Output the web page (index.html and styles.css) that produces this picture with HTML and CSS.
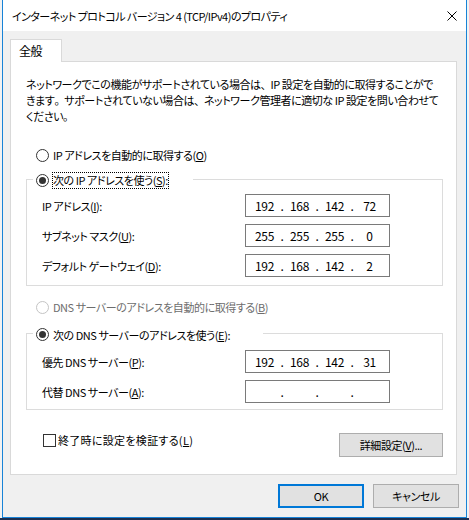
FILE: index.html
```html
<!DOCTYPE html>
<html lang="ja">
<head>
<meta charset="utf-8">
<title>インターネット プロトコル バージョン 4 (TCP/IPv4)のプロパティ</title>
<link rel="stylesheet" href="styles.css">
</head>
<body>
<div class="window">
  <div class="titlebar">
    <span class="title">インターネット プロトコル バージョン 4 (TCP/IPv4)のプロパティ</span>
    <svg class="close" width="10" height="10" viewBox="0 0 10 10"><path d="M0.5 0.5L9.5 9.5M9.5 0.5L0.5 9.5" stroke="#000" stroke-width="1" fill="none"/></svg>
  </div>
  <div class="client">
    <div class="tab">全般</div>
    <div class="panel">
      <p class="desc">ネットワークでこの機能がサポートされている場合は<span class="fw">、</span>IP 設定を自動的に取得することがで<br>きます<span class="fw">。</span>サポートされていない場合は<span class="fw">、</span>ネットワーク管理者に適切な IP 設定を問い合わせて<br>ください<span class="fw">。</span></p>

      <div class="radio-row r1"><span class="radio"></span><span class="rlabel">IP アドレスを自動的に取得する(<u>O</u>)</span></div>

      <div class="group g1">
        <div class="legend lg1"><span class="radio checked"></span><span class="rlabel focus">次の IP アドレスを使う(<u>S</u>):</span></div>
        <div class="fields">
          <div class="field"><span class="flabel">IP アドレス(<u>I</u>):</span><div class="ipbox"><span>192</span><i>.</i><span>168</span><i>.</i><span>142</span><i>.</i><span>72</span></div></div>
          <div class="field"><span class="flabel">サブネット マスク(<u>U</u>):</span><div class="ipbox"><span>255</span><i>.</i><span>255</span><i>.</i><span>255</span><i>.</i><span>0</span></div></div>
          <div class="field"><span class="flabel">デフォルト ゲートウェイ(<u>D</u>):</span><div class="ipbox"><span>192</span><i>.</i><span>168</span><i>.</i><span>142</span><i>.</i><span>2</span></div></div>
        </div>
      </div>

      <div class="radio-row r3 disabled"><span class="radio"></span><span class="rlabel">DNS サーバーのアドレスを自動的に取得する(<u>B</u>)</span></div>

      <div class="group g2">
        <div class="legend lg2"><span class="radio checked"></span><span class="rlabel">次の DNS サーバーのアドレスを使う(<u>E</u>):</span></div>
        <div class="fields">
          <div class="field"><span class="flabel">優先 DNS サーバー(<u>P</u>):</span><div class="ipbox"><span>192</span><i>.</i><span>168</span><i>.</i><span>142</span><i>.</i><span>31</span></div></div>
          <div class="field"><span class="flabel">代替 DNS サーバー(<u>A</u>):</span><div class="ipbox"><span></span><i>.</i><span></span><i>.</i><span></span><i>.</i><span></span></div></div>
        </div>
      </div>

      <div class="bottomrow">
        <div class="check"><span class="cbox"></span><span class="kanji">終了時に設定を検証する(<u>L</u>)</span></div>
        <div class="btn adv">詳細設定(<u>V</u>)...</div>
      </div>
    </div>
    <div class="buttons">
      <div class="btn default">OK</div>
      <div class="btn">キャンセル</div>
    </div>
  </div>
</div>
</body>
</html>
```

FILE: styles.css
```css
* { box-sizing: border-box; }
html, body { margin: 0; padding: 0; }
body {
  height: 520px;
  overflow: hidden;
  background: linear-gradient(#f2f2f2 0, #f2f2f2 518px, #1d2f4f 518px);
  font-family: "Noto Sans CJK JP", sans-serif;
  font-size: 11px;
  letter-spacing: -0.45px;
  color: #000;
  font-feature-settings: "palt";
}
.window {
  margin-left: 2px;
  width: 465px;
  height: 518px;
  border: 1px solid #1883d7;
  border-top: none;
  display: flex;
  flex-direction: column;
  background: #f0f0f0;
}
.titlebar {
  height: 31px;
  flex: none;
  background: #fff;
  display: flex;
  align-items: center;
  justify-content: space-between;
  padding: 0 9px 0 9px;
}
.title { line-height: 16px; letter-spacing: -0.55px; }
.close { display: block; }
.client {
  flex: 1;
  padding: 8px 0 0 7px;
  display: flex;
  flex-direction: column;
}
.tab {
  width: 52px;
  height: 23px;
  border: 1px solid #d9d9d9;
  border-bottom: none;
  background: #fff;
  position: relative;
  z-index: 1;
  margin-bottom: -1px;
  padding-left: 8px;
  line-height: 21px;
  font-size: 12px;
}
.panel {
  width: 447px;
  height: 414px;
  border: 1px solid #d9d9d9;
  background: #fff;
  padding-top: 14px;
  display: flex;
  flex-direction: column;
}
.desc {
  margin: 0 0 0 15px;
  line-height: 16px;
  white-space: nowrap;
}
.fw { font-feature-settings: normal; letter-spacing: -1px; }
.kanji { letter-spacing: 0.3px; }
.radio-row {
  display: flex;
  align-items: center;
  height: 16px;
  margin-left: 25px;
}
.r1 { margin-top: 23px; }
.r3 { margin-top: 13px; }
.radio {
  position: relative;
  flex: none;
  width: 13px;
  height: 13px;
  border: 1px solid #333;
  border-radius: 50%;
  background: #fff;
  margin-right: 4px;
}
.radio.checked::after {
  content: "";
  position: absolute;
  left: 2px; top: 2px; right: 2px; bottom: 2px;
  border-radius: 50%;
  background: #333;
}
.disabled { color: #6d6d6d; }
.disabled .radio { border-color: #c4c4c4; }
.group {
  margin: 0 13px 0 15px;
  border: 1px solid #dcdcdc;
  padding-left: 15px;
}
.g1 { margin-top: 16px; padding-bottom: 8px; }
.g2 { margin-top: 18px; padding-bottom: 6px; }
.legend {
  display: flex;
  align-items: center;
  height: 17px;
  margin: -8px 0 0 -9px;
  padding-left: 3px;
  background: #fff;
}
.legend .radio { margin-right: 3px; }
.lg1 { width: 160px; }
.lg2 { width: 230px; }
.focus {
  border: 1px dotted #000;
  height: 17px;
  line-height: 15px;
}
.lg2 .rlabel { padding-left: 1px; }
.fields {
  display: flex;
  flex-direction: column;
  gap: 7px;
}
.g1 .fields { margin-top: 5px; }
.g2 .fields { margin-top: 7px; }
.field {
  display: flex;
  align-items: center;
  height: 23px;
}
.flabel { width: 203px; flex: none; }
.ipbox {
  width: 145px;
  height: 23px;
  border: 1px solid #7a7a7a;
  background: #fff;
  display: flex;
  align-items: center;
  padding-left: 4px;
  font-size: 12px;
  letter-spacing: -0.3px;
}
.ipbox span { width: 29px; text-align: center; }
.ipbox i { width: 6px; font-style: normal; text-align: center; }
.bottomrow {
  display: flex;
  justify-content: space-between;
  align-items: flex-start;
  margin: 23px 13px 0 32px;
}
.check {
  display: flex;
  align-items: center;
  height: 14px;
}
.cbox {
  width: 13px;
  height: 13px;
  border: 1px solid #333;
  background: #fff;
  margin-right: 2px;
}
.btn {
  width: 86px;
  height: 24px;
  border: 1px solid #adadad;
  background: #e1e1e1;
  display: flex;
  align-items: center;
  justify-content: center;
}
.btn.adv { width: 104px; }
.btn.default { border: 2px solid #0078d7; }
.buttons {
  display: flex;
  justify-content: flex-end;
  gap: 9px;
  margin: 9px 7px 0 0;
}
```
